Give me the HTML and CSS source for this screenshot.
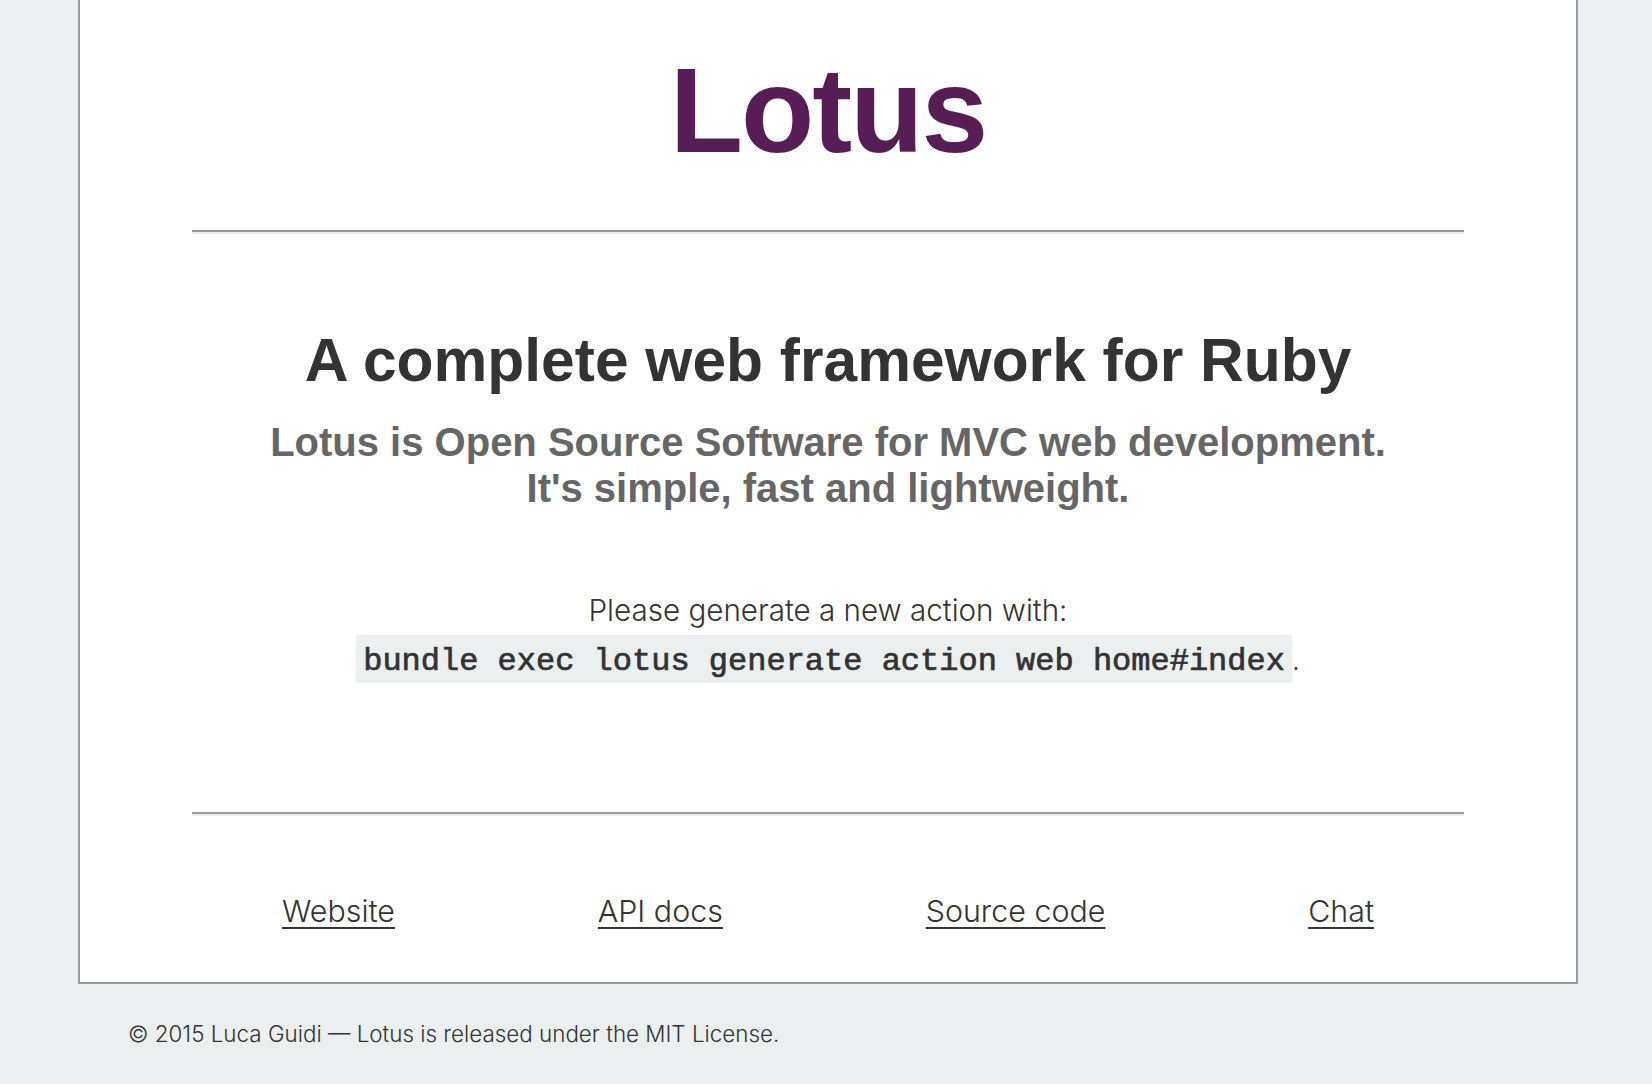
FILE: index.html
```html
<!DOCTYPE html>
<html lang="en">
<head>
<meta charset="utf-8">
<title>Lotus</title>
<link rel="stylesheet" href="styles.css">
</head>
<body>
<div class="page">
  <h1 class="brand">Lotus</h1>
  <hr class="rule">
  <h2 class="tagline">A complete web framework for Ruby</h2>
  <p class="lead">Lotus is Open Source Software for MVC web development.<br>It's simple, fast and lightweight.</p>
  <p class="hint">Please generate a new action with:</p>
  <p class="command"><code class="code">bundle exec lotus generate action web home#index</code>.</p>
  <hr class="rule rule-bottom">
  <nav class="links">
    <a href="#">Website</a>
    <a href="#">API docs</a>
    <a href="#">Source code</a>
    <a href="#">Chat</a>
  </nav>
</div>
<footer class="footer">© 2015 Luca Guidi — Lotus is released under the MIT License.</footer>
</body>
</html>
```

FILE: styles.css
```css
html, body {
  margin: 0;
  padding: 0;
}
body {
  background: #ebeff0;
  font-family: Inter, "Liberation Sans", sans-serif;
  font-weight: 300;
  color: #333;
}
.page {
  box-sizing: border-box;
  width: 1500px;
  margin-left: 78px;
  background: #fff;
  border: 2px solid #999;
  border-top: 0;
  padding: 50px 112px 51px;
  text-align: center;
}
.brand {
  margin: 0;
  font-family: "Liberation Sans", Arial, sans-serif;
  font-weight: 700;
  font-size: 120px;
  line-height: 120px;
  letter-spacing: -2px;
  color: #571e55;
}
.rule {
  height: 0;
  margin: 60px 0 0;
  border: 0;
  border-top: 2px solid #999;
  border-bottom: 2px solid #eee;
}
.tagline {
  margin: 90px 0 0;
  font-family: "Liberation Sans", Arial, sans-serif;
  font-weight: 700;
  font-size: 60.5px;
  line-height: 72px;
  color: #333;
}
.lead {
  margin: 23px 0 0;
  font-family: "Liberation Sans", Arial, sans-serif;
  font-weight: 700;
  font-size: 40px;
  line-height: 46px;
  color: #666;
}
.hint {
  margin: 79px 0 0;
  font-size: 29.6px;
  line-height: 40px;
  color: #333;
}
.command {
  margin: 5px 0 0;
  font-size: 28px;
  line-height: 48px;
  color: #333;
}
.code {
  display: inline-block;
  font-family: "Liberation Mono", "Courier New", monospace;
  font-weight: 400;
  -webkit-text-stroke: 0.7px #333;
  font-size: 32px;
  line-height: 37px;
  padding: 8px 7px 3px;
  background: #ebeff0;
  color: #333;
}
.rule-bottom {
  margin-top: 128px;
}
.links {
  display: flex;
  justify-content: space-between;
  padding: 0 90px;
  margin-top: 75px;
  font-size: 30.4px;
  line-height: 40px;
}
.links a {
  color: #333;
  text-decoration: underline;
  text-decoration-thickness: 2px;
  text-underline-offset: 5px;
}
.footer {
  margin-left: 78px;
  padding: 35px 50px 30px;
  font-size: 22.4px;
  line-height: 30px;
  color: #333;
}
```
